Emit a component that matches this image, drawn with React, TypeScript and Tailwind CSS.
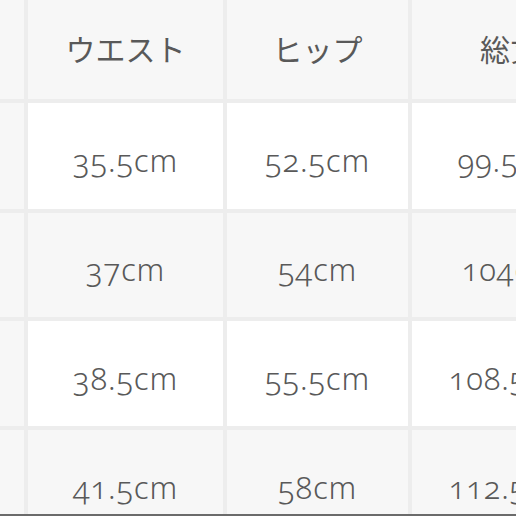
const headers = ["", "ウエスト", "ヒップ", "総丈"];

const rows = [
  ["35.5cm", "52.5cm", "99.5cm"],
  ["37cm", "54cm", "104cm"],
  ["38.5cm", "55.5cm", "108.5cm"],
  ["41.5cm", "58cm", "112.5cm"],
];

export default function App() {
  return (
    <div className="flex h-[516px] w-[516px] flex-col overflow-hidden bg-white">
      <div className="flex-1 overflow-hidden">
        <div
          className="grid w-max grid-cols-[24px_195px_181px_196px] grid-rows-[99px_106px_104px_105px_106px] gap-[4px] bg-[#ededed] text-[#595959] oldstyle-nums"
          style={{ fontFamily: '"Noto Sans", "Noto Sans CJK JP", sans-serif' }}
        >
          {headers.map((h, i) => (
            <div key={i} className="flex items-center justify-center bg-[#f7f7f7] text-[30px] font-normal whitespace-nowrap">
              {h}
            </div>
          ))}
          {rows.map((r, ri) => (
            <>
              <div key={`h${ri}`} className="bg-[#f7f7f7]" />
              {r.map((v, ci) => (
                <div
                  key={`${ri}-${ci}`}
                  className={`flex items-center justify-center pt-[9px] text-[31px] font-[350] tracking-[0.8px] whitespace-nowrap ${ri % 2 === 0 ? "bg-white" : "bg-[#f7f7f7]"}`}
                >
                  {v}
                </div>
              ))}
            </>
          ))}
        </div>
      </div>
      <div className="h-[2px] bg-[#6b6b6b]" />
    </div>
  );
}
